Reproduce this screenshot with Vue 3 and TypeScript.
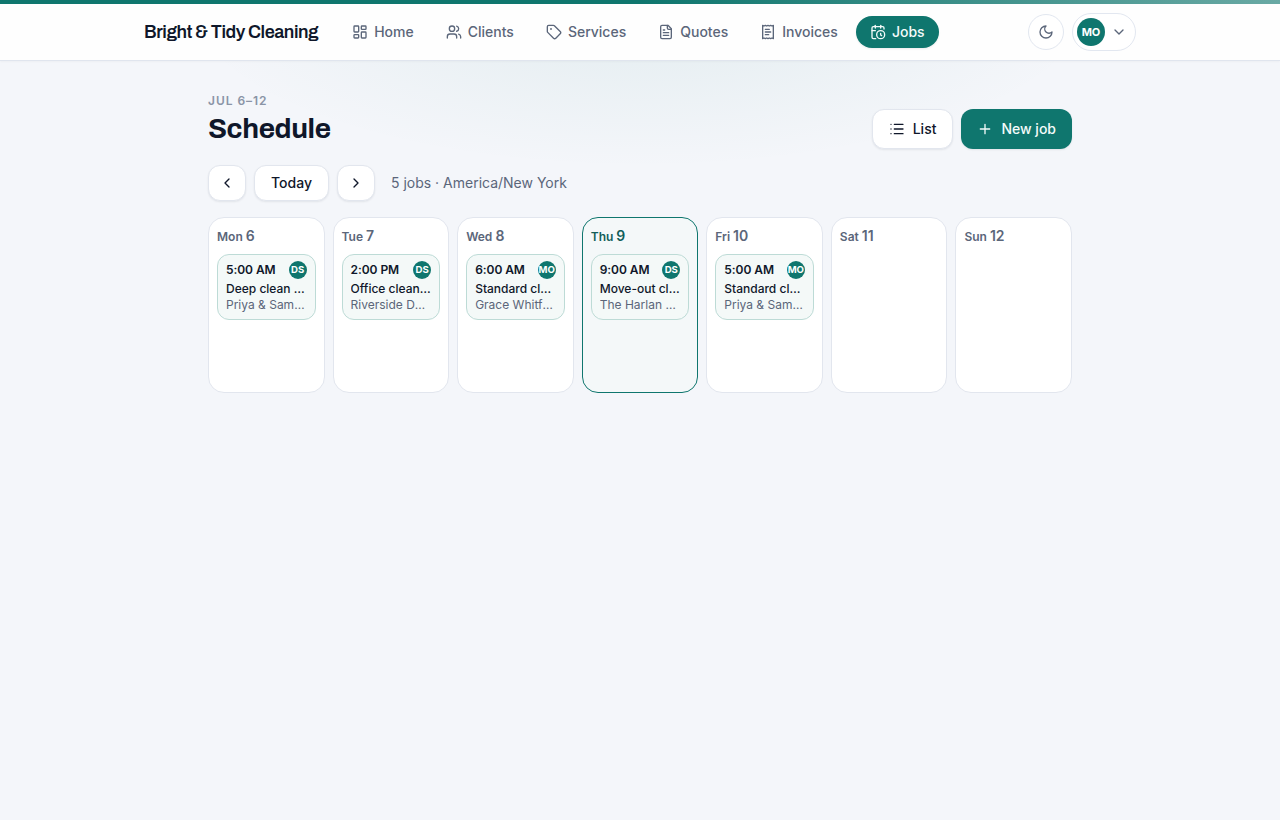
<script setup lang="ts">
interface Job {
  time: string
  initials: string
  title: string
  client: string
}
interface Day {
  name: string
  date: number
  today?: boolean
  jobs: Job[]
}
interface NavItem {
  label: string
  paths: string[]
  active?: boolean
}

const nav: NavItem[] = [
  {
    label: 'Home',
    paths: ['M4 3h5a1 1 0 0 1 1 1v7a1 1 0 0 1-1 1H4a1 1 0 0 1-1-1V4a1 1 0 0 1 1-1z', 'M15 3h5a1 1 0 0 1 1 1v3a1 1 0 0 1-1 1h-5a1 1 0 0 1-1-1V4a1 1 0 0 1 1-1z', 'M15 12h5a1 1 0 0 1 1 1v7a1 1 0 0 1-1 1h-5a1 1 0 0 1-1-1v-7a1 1 0 0 1 1-1z', 'M4 16h5a1 1 0 0 1 1 1v3a1 1 0 0 1-1 1H4a1 1 0 0 1-1-1v-3a1 1 0 0 1 1-1z'],
  },
  {
    label: 'Clients',
    paths: ['M16 21v-2a4 4 0 0 0-4-4H6a4 4 0 0 0-4 4v2', 'M9 3a4 4 0 1 0 0 8a4 4 0 1 0 0-8z', 'M22 21v-2a4 4 0 0 0-3-3.87', 'M16 3.13a4 4 0 0 1 0 7.75'],
  },
  {
    label: 'Services',
    paths: ['M12.586 2.586A2 2 0 0 0 11.172 2H4a2 2 0 0 0-2 2v7.172a2 2 0 0 0 .586 1.414l8.704 8.704a2.426 2.426 0 0 0 3.42 0l6.58-6.58a2.426 2.426 0 0 0 0-3.42z', 'M7.5 7a.5.5 0 1 0 0 1a.5.5 0 1 0 0-1z'],
  },
  {
    label: 'Quotes',
    paths: ['M15 2H6a2 2 0 0 0-2 2v16a2 2 0 0 0 2 2h12a2 2 0 0 0 2-2V7Z', 'M14 2v4a2 2 0 0 0 2 2h4', 'M10 9H8', 'M16 13H8', 'M16 17H8'],
  },
  {
    label: 'Invoices',
    paths: ['M4 2v20l2-1 2 1 2-1 2 1 2-1 2 1 2-1 2 1V2l-2 1-2-1-2 1-2-1-2 1-2-1-2 1Z', 'M14 8H8', 'M16 12H8', 'M13 16H8'],
  },
  {
    label: 'Jobs',
    active: true,
    paths: ['M21 7.5V6a2 2 0 0 0-2-2H5a2 2 0 0 0-2 2v14a2 2 0 0 0 2 2h3.5', 'M16 2v4', 'M8 2v4', 'M3 10h5', 'M17.5 17.5 16 16.3V14', 'M16 10a6 6 0 1 0 0 12a6 6 0 1 0 0-12z'],
  },
]

const days: Day[] = [
  { name: 'Mon', date: 6, jobs: [{ time: '5:00 AM', initials: 'DS', title: 'Deep clean — kitchen', client: 'Priya & Sam Patel' }] },
  { name: 'Tue', date: 7, jobs: [{ time: '2:00 PM', initials: 'DS', title: 'Office cleaning', client: 'Riverside Dental' }] },
  { name: 'Wed', date: 8, jobs: [{ time: '6:00 AM', initials: 'MO', title: 'Standard clean', client: 'Grace Whitfield' }] },
  { name: 'Thu', date: 9, today: true, jobs: [{ time: '9:00 AM', initials: 'DS', title: 'Move-out clean', client: 'The Harlan Group' }] },
  { name: 'Fri', date: 10, jobs: [{ time: '5:00 AM', initials: 'MO', title: 'Standard clean', client: 'Priya & Sam Patel' }] },
  { name: 'Sat', date: 11, jobs: [] },
  { name: 'Sun', date: 12, jobs: [] },
]
</script>

<template>
  <div class="page">
    <header class="header">
      <div class="accent"></div>
      <div class="bar">
        <div class="brand">Bright &amp; Tidy Cleaning</div>
        <nav class="nav">
          <a v-for="item in nav" :key="item.label" class="nav-item" :class="{ active: item.active }">
            <svg class="icon" viewBox="0 0 24 24"><path v-for="p in item.paths" :key="p" :d="p" /></svg>
            <span>{{ item.label }}</span>
          </a>
        </nav>
        <div class="tools">
          <button class="theme" aria-label="Theme">
            <svg class="icon" viewBox="0 0 24 24"><path d="M12 3a6 6 0 0 0 9 9 9 9 0 1 1-9-9Z" /></svg>
          </button>
          <button class="user">
            <span class="avatar">MO</span>
            <svg class="icon" viewBox="0 0 24 24"><path d="m6 9 6 6 6-6" /></svg>
          </button>
        </div>
      </div>
    </header>

    <main class="main">
      <div class="heading">
        <div>
          <div class="eyebrow">Jul 6–12</div>
          <h1 class="title">Schedule</h1>
        </div>
        <div class="actions">
          <button class="btn">
            <svg class="icon" viewBox="0 0 24 24"><path d="M3 5h.01M3 12h.01M3 19h.01M8 5h13M8 12h13M8 19h13" /></svg>
            List
          </button>
          <button class="btn primary">
            <svg class="icon" viewBox="0 0 24 24"><path d="M5 12h14M12 5v14" /></svg>
            New job
          </button>
        </div>
      </div>

      <div class="controls">
        <button class="btn small arrow" aria-label="Previous week">
          <svg class="icon" viewBox="0 0 24 24"><path d="m15 18-6-6 6-6" /></svg>
        </button>
        <button class="btn small">Today</button>
        <button class="btn small arrow" aria-label="Next week">
          <svg class="icon" viewBox="0 0 24 24"><path d="m9 18 6-6-6-6" /></svg>
        </button>
        <span class="summary">5 jobs · America/New York</span>
      </div>

      <div class="week">
        <section v-for="day in days" :key="day.date" class="day" :class="{ today: day.today }">
          <div class="day-name">{{ day.name }} <span class="day-num">{{ day.date }}</span></div>
          <article v-for="job in day.jobs" :key="job.time" class="job">
            <div class="job-top">
              <span class="job-time">{{ job.time }}</span>
              <span class="job-avatar">{{ job.initials }}</span>
            </div>
            <div class="job-title">{{ job.title }}</div>
            <div class="job-client">{{ job.client }}</div>
          </article>
        </section>
      </div>
    </main>
  </div>
</template>

<style>
body {
  background: #f4f6fa;
}
</style>

<style scoped>
.page {
  min-height: 820px;
  box-sizing: border-box;
  font-family: Inter, "Liberation Sans", sans-serif;
  font-size: 14px;
  line-height: 20px;
  color: #0f172a;
  background: radial-gradient(460px 168px at 50% 0, rgba(15, 118, 110, 0.08), rgba(15, 118, 110, 0)) #f4f6fa;
}
.page * {
  box-sizing: border-box;
}
button {
  font: inherit;
  color: inherit;
  margin: 0;
  padding: 0;
}
.icon {
  width: 16px;
  height: 16px;
  flex: none;
  fill: none;
  stroke: currentColor;
  stroke-width: 2;
  stroke-linecap: round;
  stroke-linejoin: round;
}
.header {
  height: 61px;
  background: #fefefe;
  border-bottom: 1px solid #e0e5ee;
  box-shadow: 0 1px 2px rgba(15, 23, 42, 0.03);
}
.accent {
  height: 4px;
  background: linear-gradient(90deg, #0f766e 0%, #0f766e 50%, #69a9a4 100%);
}
.bar {
  width: 992px;
  height: 56px;
  margin: 0 auto;
  display: flex;
  align-items: center;
}
.brand {
  width: 174.2px;
  margin-right: 20px;
  font-family: Archivo, "Liberation Sans", sans-serif;
  font-size: 18px;
  font-weight: 600;
  letter-spacing: -0.45px;
  white-space: nowrap;
}
.nav {
  display: flex;
  gap: 4px;
}
.nav-item {
  display: flex;
  align-items: center;
  gap: 6px;
  height: 32px;
  padding: 0 14px;
  border-radius: 16px;
  font-weight: 500;
  color: #5b667a;
}
.nav-item.active {
  background: #0f766e;
  color: #f4fbfa;
  box-shadow: 0 1px 2px rgba(15, 23, 42, 0.08);
}
.tools {
  margin-left: auto;
  display: flex;
  align-items: center;
  gap: 8px;
  color: #5b667a;
}
.theme {
  width: 36px;
  height: 36px;
  display: grid;
  place-items: center;
  border: 1px solid #e2e7f0;
  border-radius: 50%;
  background: #fff;
}
.user {
  width: 64px;
  height: 38px;
  padding-left: 4px;
  display: flex;
  align-items: center;
  gap: 6px;
  border: 1px solid #e2e7f0;
  border-radius: 19px;
  background: #fff;
}
.avatar {
  width: 28px;
  height: 28px;
  display: grid;
  place-items: center;
  border-radius: 50%;
  background: #0f766e;
  color: #fff;
  font-size: 11px;
  font-weight: 700;
}
.main {
  width: 864px;
  margin: 0 auto;
  padding-top: 32px;
}
.heading {
  height: 56px;
  display: flex;
  justify-content: space-between;
  align-items: flex-end;
}
.eyebrow {
  height: 16px;
  font-size: 12px;
  line-height: 16px;
  font-weight: 600;
  letter-spacing: 0.96px;
  text-transform: uppercase;
  color: #8a94a6;
}
.title {
  margin: 2px 0 0;
  height: 38px;
  font-family: Archivo, "Liberation Sans", sans-serif;
  font-size: 28px;
  line-height: 36px;
  font-weight: 700;
  letter-spacing: -0.42px;
}
.actions {
  display: flex;
  gap: 8px;
}
.btn {
  height: 40px;
  padding: 0 16px;
  display: flex;
  align-items: center;
  justify-content: center;
  gap: 8px;
  border: 1px solid #e2e6ee;
  border-radius: 12px;
  background: #fff;
  font-weight: 500;
  box-shadow: 0 1px 2px rgba(15, 23, 42, 0.08);
}
.btn.primary {
  background: #0f766e;
  border: none;
  color: #f4fbfa;
}
.btn.small {
  height: 36px;
}
.btn.arrow {
  width: 38px;
  padding: 0;
}
.controls {
  margin-top: 16px;
  display: flex;
  align-items: center;
  gap: 8px;
}
.summary {
  margin-left: 8px;
  color: #5b667a;
}
.week {
  margin-top: 16px;
  display: grid;
  grid-template-columns: repeat(7, minmax(0, 1fr));
  gap: 8px;
}
.day {
  height: 176px;
  padding: 8px;
  border: 1px solid #e2e6ee;
  border-radius: 16px;
  background: #fff;
}
.day.today {
  border-color: #0f766e;
  background: #f4f8f9;
}
.day-name {
  height: 20px;
  margin-bottom: 8px;
  font-size: 12px;
  font-weight: 600;
  color: #5b667a;
}
.day-num {
  font-size: 14px;
}
.today .day-name {
  color: #115e59;
}
.job {
  height: 66px;
  padding: 6px 8px;
  border: 1px solid #bddbd6;
  border-radius: 12px;
  background: #f4f9f8;
  font-size: 12px;
  line-height: 16px;
}
.job-top {
  height: 18px;
  margin-bottom: 2px;
  display: flex;
  align-items: center;
  justify-content: space-between;
}
.job-time {
  font-weight: 600;
  letter-spacing: -0.06px;
}
.job-avatar {
  width: 18px;
  height: 18px;
  display: flex;
  align-items: center;
  justify-content: center;
  border-radius: 50%;
  background: #0f766e;
  color: #fff;
  font-size: 9.6px;
  font-weight: 700;
}
.job-title,
.job-client {
  overflow: hidden;
  text-overflow: ellipsis;
  white-space: nowrap;
}
.job-title {
  font-weight: 500;
}
.job-client {
  color: #5b667a;
}
</style>
